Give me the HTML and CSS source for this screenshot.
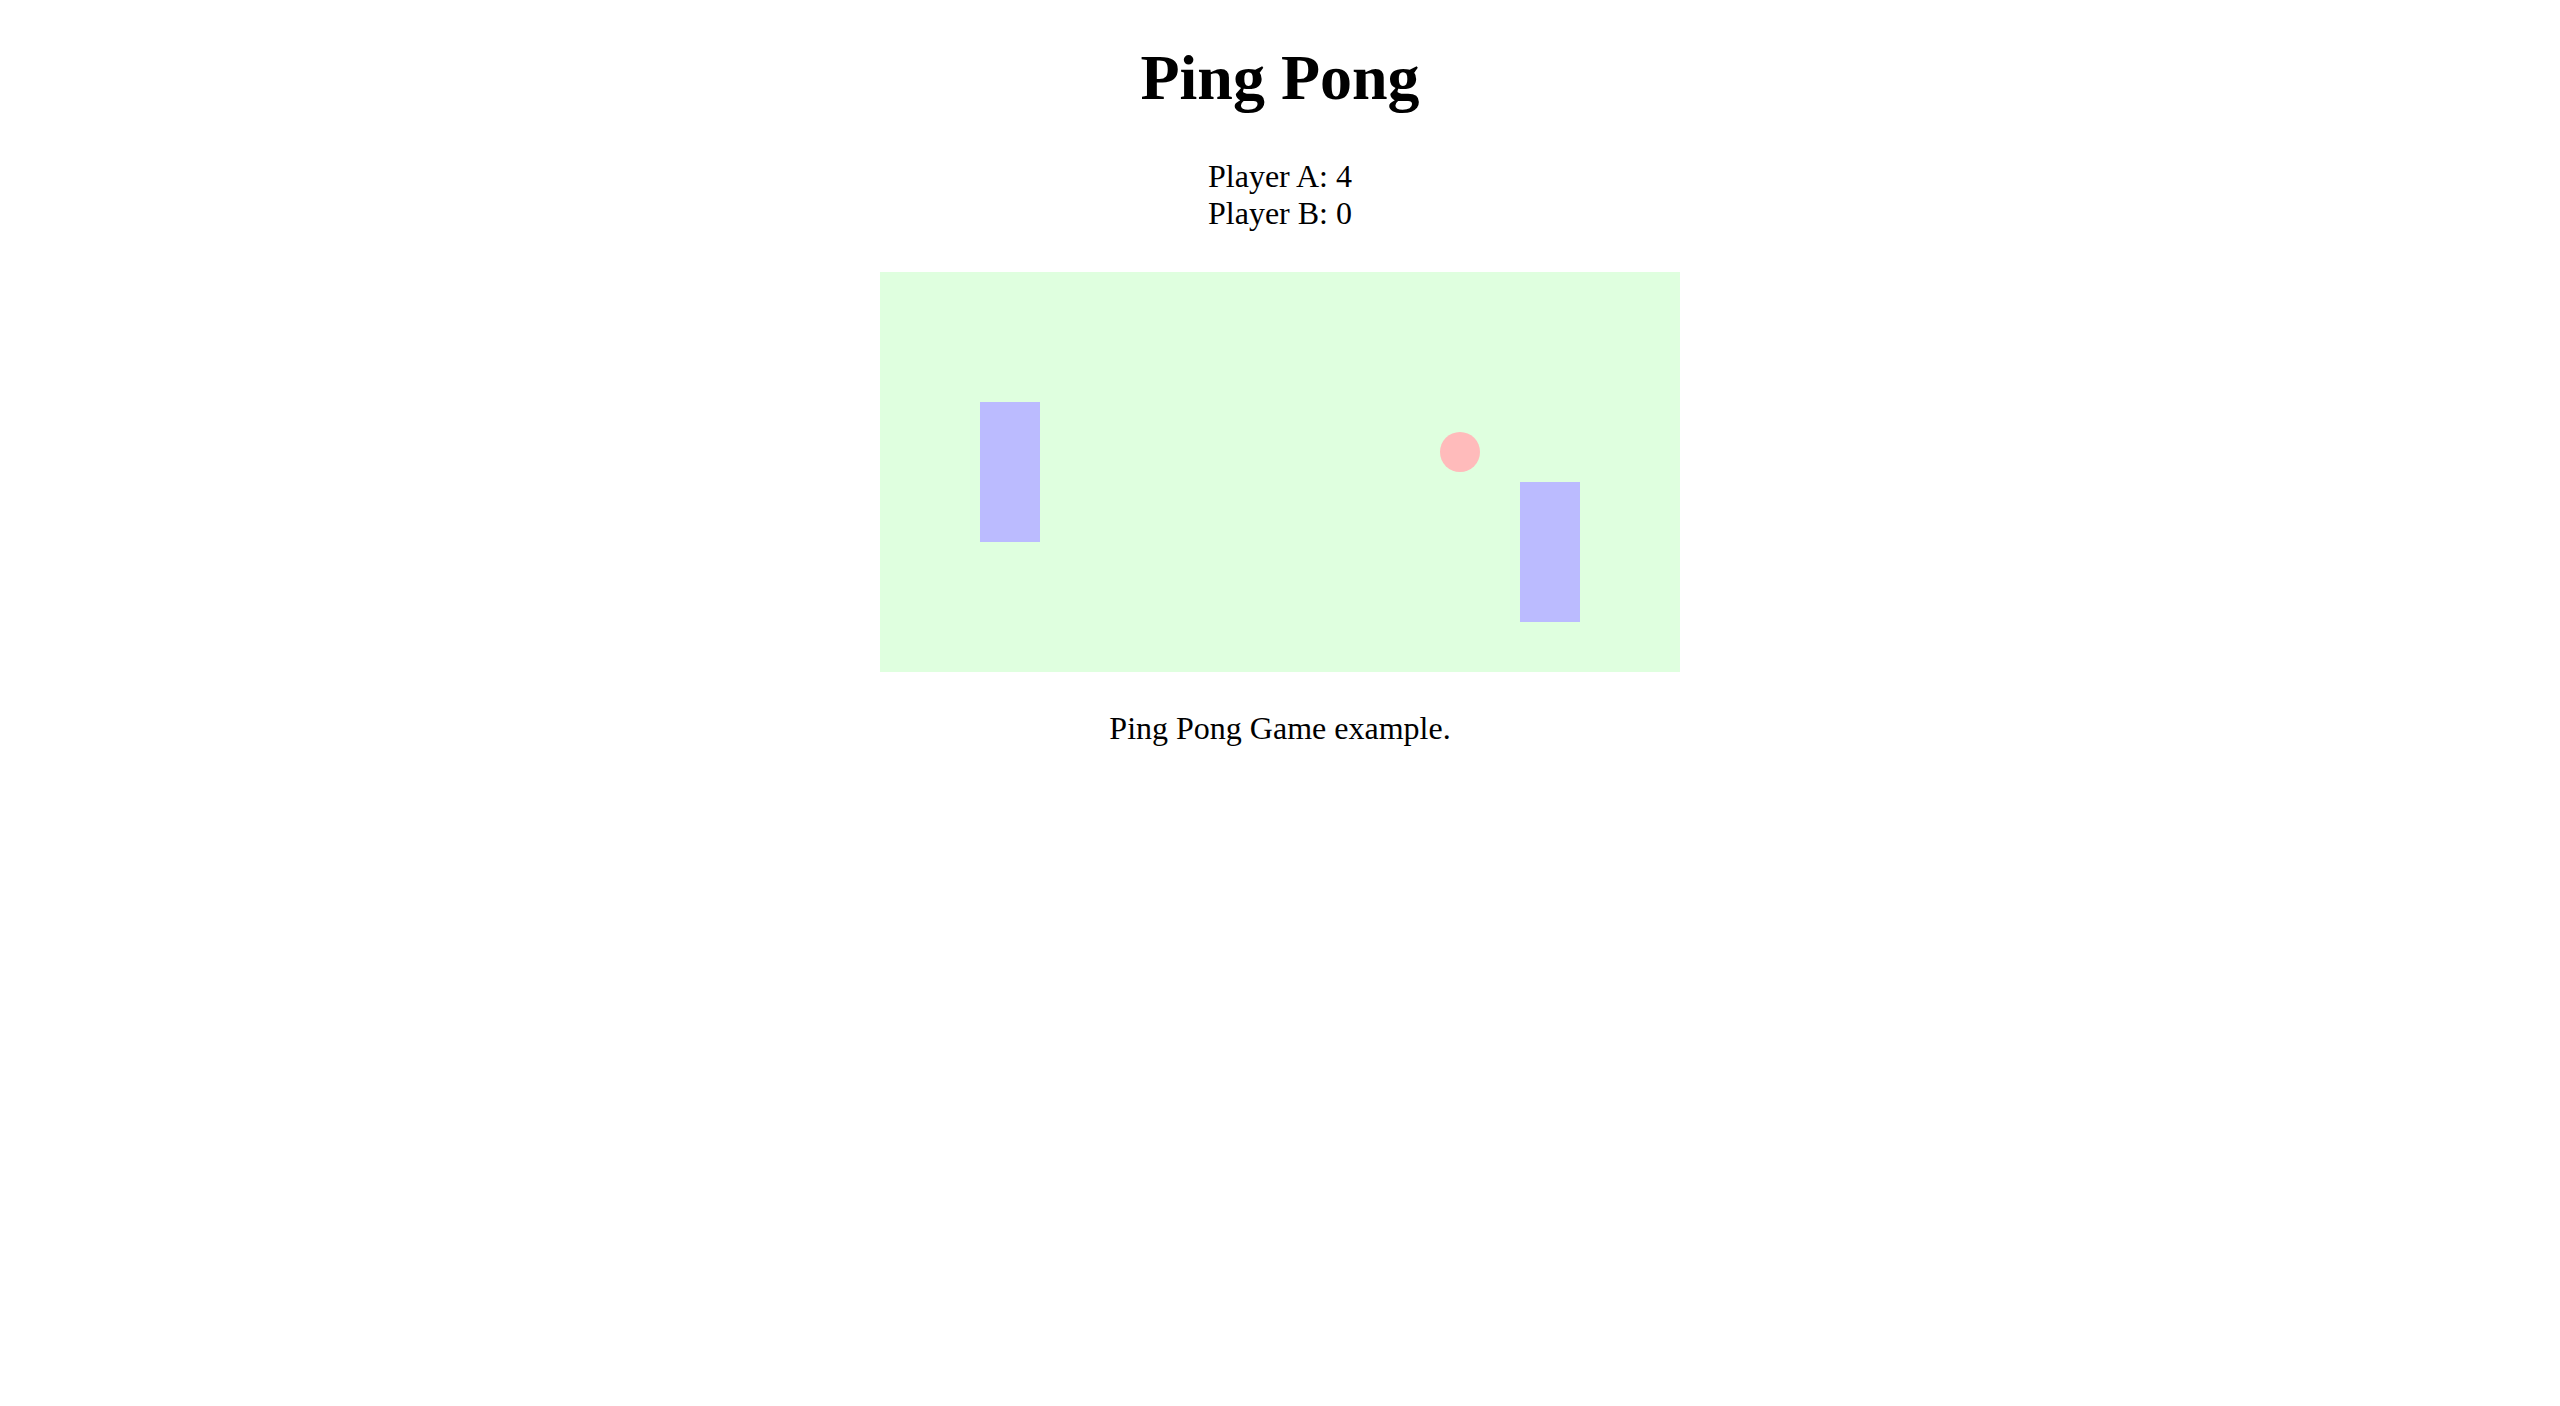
FILE: index.html
```html
<!DOCTYPE html>
<html>
<head>
<meta charset="utf-8">
<title>Ping Pong</title>
<link rel="stylesheet" href="styles.css">
</head>
<body>
<h1 class="title">Ping Pong</h1>
<div class="scores">
  <div>Player A: 4</div>
  <div>Player B: 0</div>
</div>
<div class="board-wrap">
  <svg class="board" width="800" height="400" viewBox="0 0 800 400">
    <rect x="0" y="0" width="800" height="400" fill="#dfffdf"/>
    <rect x="100" y="130" width="60" height="140" fill="#bbbbff"/>
    <rect x="640" y="210" width="60" height="140" fill="#bbbbff"/>
    <circle cx="580" cy="180" r="20" fill="#ffbbbb"/>
  </svg>
</div>
<p class="caption">Ping Pong Game example.</p>
</body>
</html>
```
FILE: styles.css
```css
html, body {
  margin: 0;
  padding: 0;
  background: #ffffff;
}
body {
  font-family: "Liberation Serif", "Times New Roman", serif;
  font-size: 32px;
  color: #000000;
  text-align: center;
}
.title {
  font-size: 64px;
  font-weight: bold;
  margin: 41px 0 0;
}
.scores {
  margin-top: 43px;
}
.board-wrap {
  margin-top: 40px;
}
.board {
  display: block;
  margin: 0 auto;
}
.caption {
  margin: 38px 0 0;
}
```
